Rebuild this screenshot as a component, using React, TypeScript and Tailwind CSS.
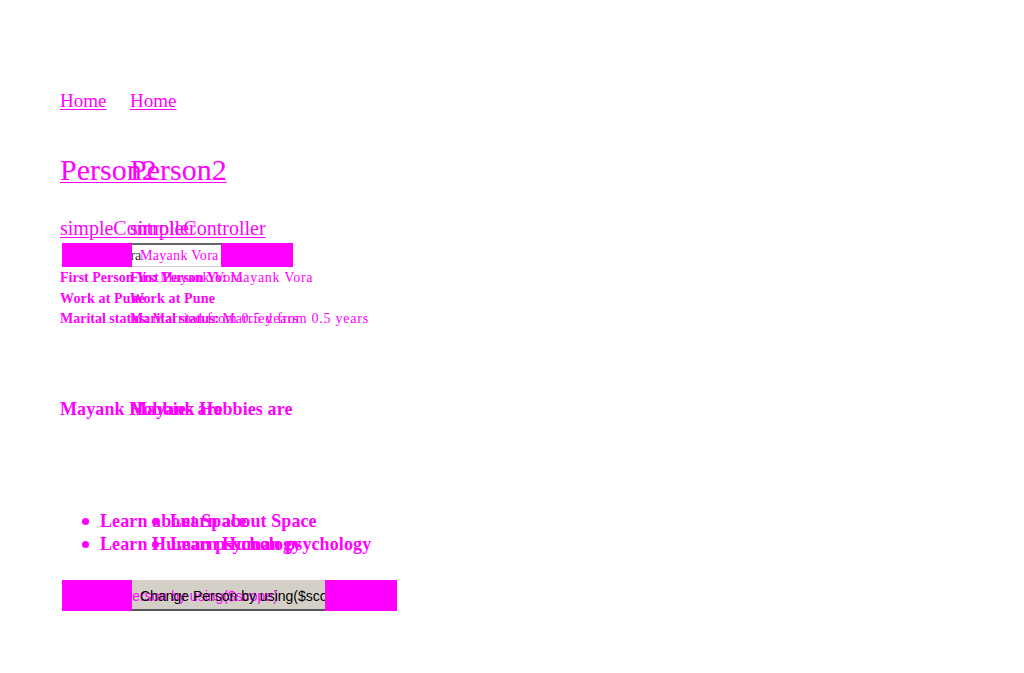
import type { ReactNode } from 'react';

// the page is shown twice, the second copy shifted 70px to the right
function Twice({ children, className }: { children: ReactNode; className: string }) {
  return (
    <div className={'relative whitespace-nowrap ' + className}>
      <div>{children}</div>
      <div className="absolute left-[70px] top-0">{children}</div>
    </div>
  );
}

const hobbies = ['Learn about Space', 'Learn Human psychology'];

export default function App() {
  return (
    <div className="min-h-[673px] bg-white pl-[60px] pt-[90px] font-['Liberation_Serif',serif] text-[#ff00ff]">
      <Twice className="h-[22px] text-[19px] leading-[22px]">
        <span className="underline decoration-1 underline-offset-2">Home</span>
      </Twice>

      <Twice className="mt-[41px] h-[34px] text-[30px] leading-[34px]">
        <span className="underline decoration-1 underline-offset-2">Person2</span>
      </Twice>

      <Twice className="mt-[29px] h-[24px] text-[20px] leading-[24px]">
        <span className="underline decoration-1 underline-offset-2">simpleController</span>
      </Twice>

      {/* input row */}
      <div className="mt-[3px] ml-[2px] flex h-[24px] w-[231px] bg-[#ff00ff] pl-[70px]">
        <div className="relative h-full w-[90px] overflow-hidden border-t-2 border-b border-r border-t-[#666] border-b-[#ccc] border-r-[#ff00ff] bg-white text-[14px] leading-[21px]">
          <span className="absolute left-[-66px] top-0 text-[#333]">Mayank Vora</span>
          <span className="absolute left-[8px] top-0 tracking-[0.3px]">Mayank Vora</span>
        </div>
      </div>

      <Twice className="mt-[1px] h-[20px] text-[14px] leading-[20px]">
        <b>First Person Yo: </b>
        <span className="tracking-[0.7px]">Mayank Vora</span>
      </Twice>
      <Twice className="h-[21px] text-[14px] leading-[21px]">
        <b className="tracking-[0.15px]">Work at Pune</b>
      </Twice>
      <Twice className="h-[20px] text-[14px] leading-[20px]">
        <b>Marital status: </b>
        <span className="tracking-[0.75px]">Married from 0.5 years</span>
      </Twice>

      <Twice className="mt-[69px] h-[22px] text-[18px] font-bold leading-[22px]">
        <span className="tracking-[0.1px]">Mayank Hobbies are</span>
      </Twice>

      <div className="mt-[90px]">
        {hobbies.map((h) => (
          <Twice key={h} className="h-[23px] text-[18px] font-bold leading-[23px]">
            <div className="flex items-center">
              <span className="ml-[22px] mr-[11px] h-[7px] w-[7px] rounded-full bg-[#ff00ff]" />
              <span className="tracking-[0.1px]">{h}</span>
            </div>
          </Twice>
        ))}
      </div>

      {/* button row */}
      <div className="mt-[24px] ml-[2px] flex h-[31px] w-[335px] bg-[#ff00ff] pl-[70px]">
        <div className="relative h-full w-[193px] overflow-hidden border-b-2 border-b-[#555] bg-[#d4d0c8] font-['Liberation_Sans',sans-serif] text-[14px] leading-[33px]">
          <span className="absolute left-[-62px] top-0 whitespace-nowrap text-[#ff00ff]">Change Person by using($scope)</span>
          <span className="absolute left-[8px] top-0 whitespace-nowrap text-black">Change Person by using($scope)</span>
        </div>
      </div>
    </div>
  );
}
